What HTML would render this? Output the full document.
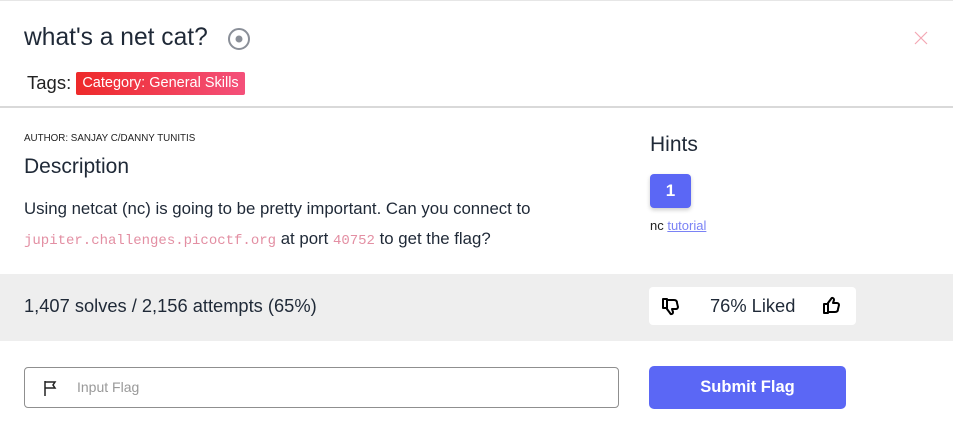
<!DOCTYPE html>
<html><head><meta charset="utf-8"><style>
*{box-sizing:border-box;margin:0;padding:0}
body{width:953px;height:431px;background:#fff;font-family:"Liberation Sans",sans-serif;color:#212529;position:relative;overflow:hidden}
.a{position:absolute;white-space:nowrap}
</style></head><body>
<div class="a" style="left:0;top:0;width:953px;height:1px;background:#e6e6e6"></div>
<div class="a" style="left:24px;top:24px;font-size:24.6px;color:#1f2937">what's a net cat?</div>
<svg class="a" style="left:227px;top:27px" width="24" height="24" viewBox="0 0 24 24"><circle cx="12" cy="12" r="10" fill="none" stroke="#8a8f98" stroke-width="2"/><circle cx="12" cy="12" r="3.5" fill="#8a8f98"/></svg>
<svg class="a" style="left:914px;top:31px" width="14" height="14" viewBox="0 0 14 14"><path d="M1 1L13 13M13 1L1 13" stroke="#f4a7b4" stroke-width="1.2"/></svg>
<div class="a" style="left:27px;top:72px;font-size:18.5px;color:#222">Tags:</div>
<div class="a" style="left:76px;top:72px;width:169px;height:23px;background:linear-gradient(90deg,#ee2a2a,#f4507a);border-radius:2px;color:#fff;font-size:14.5px;line-height:23px;text-align:center">Category: General Skills</div>
<div class="a" style="left:0;top:106px;width:953px;height:2px;background:#d9d9d9"></div>
<div class="a" style="left:24px;top:133px;font-size:9.8px;color:#222">AUTHOR: SANJAY C/DANNY TUNITIS</div>
<div class="a" style="left:24px;top:155px;font-size:21px;color:#1f2937">Description</div>
<div class="a" style="left:24px;top:199px;font-size:16.8px;color:#1f2937">Using netcat (nc) is going to be pretty important. Can you connect to</div>
<div class="a" style="left:24px;top:229px;font-size:16.8px;color:#1f2937"><span style="font-family:'Liberation Mono',monospace;color:#e38fa3;font-size:14px">jupiter.challenges.picoctf.org</span> at port <span style="font-family:'Liberation Mono',monospace;color:#e38fa3;font-size:14px">40752</span> to get the flag?</div>
<div class="a" style="left:650px;top:133px;font-size:21px;color:#1f2937">Hints</div>
<div class="a" style="left:650px;top:174px;width:41px;height:34px;background:#5b67f5;border-radius:4px;color:#fff;font-size:17px;font-weight:bold;line-height:34px;text-align:center;box-shadow:0 2px 4px rgba(0,0,0,.2)">1</div>
<div class="a" style="left:650px;top:218px;font-size:13px;color:#222">nc <span style="color:#7a82f5;text-decoration:underline">tutorial</span></div>
<div class="a" style="left:0;top:274px;width:953px;height:67px;background:#eeeeee"></div>
<div class="a" style="left:24px;top:295px;font-size:18.3px;color:#1f2937">1,407 solves / 2,156 attempts (65%)</div>
<div class="a" style="left:649px;top:287px;width:207px;height:38px;background:#fff;border-radius:4px"></div>
<div class="a" style="left:710px;top:295px;font-size:18.3px;color:#1f2937">76% Liked</div>
<svg class="a" style="left:661px;top:296px" width="20" height="20" viewBox="0 0 20 20"><path d="M2 3h4v9H2zM6 4h7c2 0 3 1 3 3l1 4c0 1-1 2-2 2h-4l1 3c0 2-2 3-3 1l-3-4z" fill="none" stroke="#000" stroke-width="2" stroke-linejoin="round"/></svg>
<svg class="a" style="left:822px;top:296px" width="20" height="20" viewBox="0 0 20 20"><path d="M2 8h4v9H2zM6 16h7c2 0 3-1 3-3l1-4c0-1-1-2-2-2h-4l1-3c0-2-2-3-3-1l-3 4z" fill="none" stroke="#000" stroke-width="2" stroke-linejoin="round"/></svg>
<div class="a" style="left:24px;top:367px;width:595px;height:41px;border:1px solid #8f8f8f;border-radius:4px"></div>
<svg class="a" style="left:42px;top:379px" width="18" height="18" viewBox="0 0 18 18"><path d="M3 2v15M3 3h10l-2 3 2 3H3" fill="none" stroke="#222" stroke-width="1.5"/></svg>
<div class="a" style="left:77px;top:379px;font-size:14px;color:#999">Input Flag</div>
<div class="a" style="left:649px;top:366px;width:197px;height:43px;background:#5b67f5;border-radius:5px;color:#fff;font-size:16.5px;font-weight:bold;line-height:43px;text-align:center">Submit Flag</div>
</body></html>
